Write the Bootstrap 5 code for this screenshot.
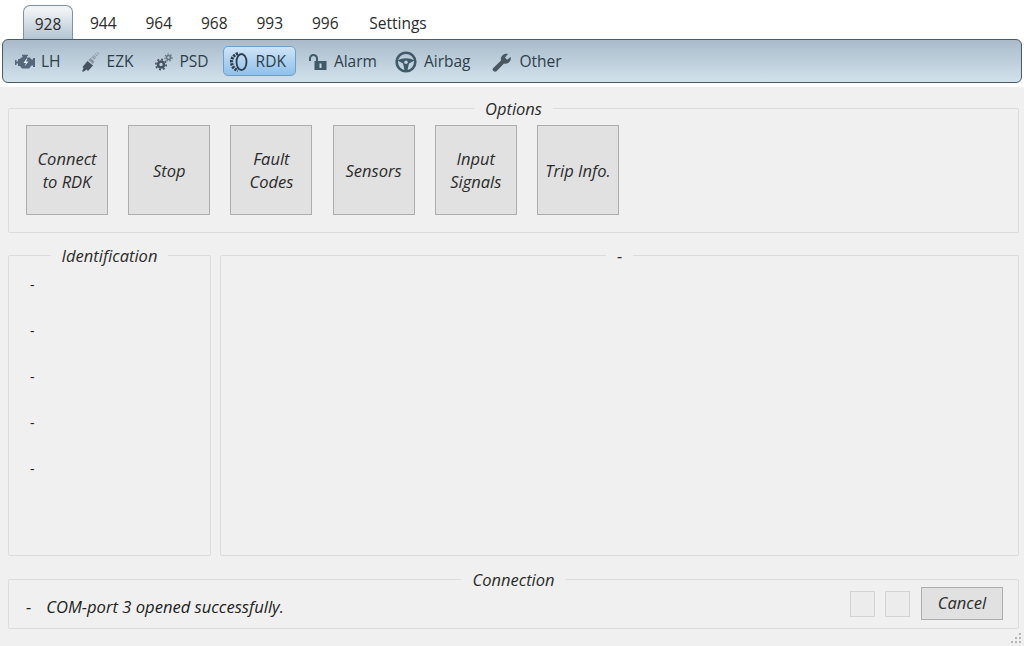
<!DOCTYPE html>
<html lang="en">
<head>
  <meta charset="UTF-8" />
  <title>Diagnostics</title>
  <link href="https://cdn.jsdelivr.net/npm/bootstrap@5.3.3/dist/css/bootstrap.min.css" rel="stylesheet" />
  <style>
    html, body { height: 100%; overflow: hidden; }
    body {
      font-family: "Open Sans", "Noto Sans", sans-serif;
      font-size: 15.5px;
      color: #222;
      background: #f0f0f0;
    }

    /* top ribbon */
    .top-area { height: 87px; background: #fff; padding: 5px 2px 0; }
    .tab-row { height: 34px; padding-left: 21px; }
    .tab-item { height: 34px; padding-top: 8px; line-height: 20px; font-size: 15.5px; color: #2b2b2b; text-align: center; }
    .tab-item.on {
      width: 50px;
      border: 1px solid #7f929f;
      border-bottom: 0;
      border-radius: 7px 7px 0 0;
      background: linear-gradient(#f1f4f6 10%, #b3c4d2);
      margin-right: 2.5px;
    }
    .tab-num { width: 55.5px; }
    .tab-last { width: 72px; margin-left: 9px; }
    .tool-bar {
      height: 44px;
      border: 1px solid #4c5a66;
      border-radius: 6px;
      background: linear-gradient(#a9bbcb, #d2e2ec);
      padding: 0 0 0 12px;
      gap: 20px;
    }
    .tool-item { height: 30px; padding-top: 2px; gap: 6px; color: #2e3e4a; line-height: 1; }
    .tool-item svg { flex: none; }
    .tool-item.on {
      border: 1px solid #6f9fc8;
      border-radius: 5px;
      background: linear-gradient(#cfe4f6, #8fc0ea);
      padding: 2px 9px 0 5px;
      margin: 0 -8px 0 -6px;
      gap: 7px;
    }
    .tool-airbag { margin-left: -2px; gap: 7px; }
    .tool-other { margin-left: 2px; gap: 7px; }

    /* group boxes */
    .group-box { border: 1px solid #dcdcdc; border-radius: 2px; margin: 0; padding: 0; min-width: 0; }
    .group-box legend {
      float: none;
      width: auto;
      margin: 0 auto;
      padding: 0 11px;
      font-size: 16.5px;
      font-style: italic;
      line-height: 20px;
      color: #2b2b2b;
      position: relative;
      top: 1px;
    }
    .page-body { padding: 11px 5px 0 8px; }
    .options-box { height: 135px; }
    .square-btn {
      width: 82px;
      height: 90px;
      border: 1px solid #adadad;
      background: #e1e1e1;
      font-style: italic;
      font-size: 16.5px;
      line-height: 23px;
      color: #2b2b2b;
      padding: 0;
    }
    .square-row { padding: 7px 0 0 17px; gap: 20.2px; }
    .mid-row { margin-top: 12px; gap: 9px; height: 311px; }
    .ident-box { width: 203px; flex: none; }
    .ident-line { height: 46px; padding-left: 21px; line-height: 20px; font-size: 14px; }
    .ident-list { padding-top: 10px; }
    .wide-box { flex: 1; }
    .conn-box { height: 60px; margin-top: 13px; }
    .conn-text { padding: 8px 0 0 17px; font-style: italic; font-size: 16.6px; gap: 15px; }
    .conn-inner { height: 34px; margin-top: -2px; padding-right: 15px; }
    .led { width: 25px; height: 26px; border: 1px solid #d2d2d2; background: #ececec; margin-left: 10px; }
    .cancel-btn {
      width: 82px;
      height: 33px;
      border: 1px solid #adadad;
      background: #e1e1e1;
      font-style: italic;
      font-size: 16.5px;
      color: #2b2b2b;
      padding: 0;
      margin-left: 11px;
    }
    .grip { position: fixed; right: 2px; bottom: 2px; }
  </style>
</head>
<body>

  <!-- Tabs and toolbar -->
  <div class="top-area">
    <div class="tab-row d-flex">
      <div class="tab-item on">928</div>
      <div class="tab-item tab-num">944</div>
      <div class="tab-item tab-num">964</div>
      <div class="tab-item tab-num">968</div>
      <div class="tab-item tab-num">993</div>
      <div class="tab-item tab-num">996</div>
      <div class="tab-item tab-last">Settings</div>
    </div>
    <div class="tool-bar d-flex align-items-center">
      <div class="tool-item d-flex align-items-center">
        <!-- engine -->
        <svg width="20" height="16" viewBox="0 0 20 16"><path d="M0 6h1.500v1.500H3V5h2l1-1.500h1.500V2H7V.8h6V2h-1v1.500h3l1.500 2H18V4h2v9h-2v-1.500h-1.500L14 14.500H7L5 12H3V9.500H1.500V11H0z" fill="#55677a"/><path d="M11.500 4.500 8.500 9H11l-1.500 3.500L13.500 7.500H11l1.500-3z" fill="#e4edf3"/></svg>
        LH
      </div>
      <div class="tool-item d-flex align-items-center">
        <!-- spark plug -->
        <svg width="20" height="22" viewBox="0 0 20 22"><path d="M1 20.500 2.500 17l-1-1 5-6 5.500 4.500-5 5.500-1.500-1.500-2.500 2z" fill="#46535e"/><path d="M7.500 9 9.500 7l4 3.500-1.700 2.400z" fill="#8795a1"/><path d="M10 6.500 16 .8l2.500 2-5 6z" fill="#9aa8b3"/><path d="M13 3.500l3 2.500M15 2l2.500 2" stroke="#d5dfe6" stroke-width=".8"/></svg>
        EZK
      </div>
      <div class="tool-item d-flex align-items-center">
        <!-- gears -->
        <svg width="20" height="18" viewBox="0 0 20 18"><circle cx="7" cy="11.500" r="3" fill="none" stroke="#46535e" stroke-width="2.600"/><circle cx="7" cy="11.500" r="5.200" fill="none" stroke="#46535e" stroke-width="1.600" stroke-dasharray="2 2"/><circle cx="14.500" cy="4.500" r="2" fill="none" stroke="#66747f" stroke-width="1.600"/><circle cx="14.500" cy="4.500" r="3.500" fill="none" stroke="#66747f" stroke-width="1.200" stroke-dasharray="1.500 1.500"/></svg>
        PSD
      </div>
      <div class="tool-item on d-flex align-items-center">
        <!-- tyre -->
        <svg width="20" height="22" viewBox="0 0 20 22"><ellipse cx="12.500" cy="11" rx="5" ry="8" fill="none" stroke="#2f3d48" stroke-width="1.800"/><path d="M9 2.500C4.500 4 2.500 7.500 2.500 11s2 7 6.500 8.500" fill="none" stroke="#2f3d48" stroke-width="3.200" stroke-dasharray="2.200 1"/></svg>
        RDK
      </div>
      <div class="tool-item d-flex align-items-center">
        <!-- open lock -->
        <svg width="20" height="18" viewBox="0 0 20 18"><path d="M2 8V5.500a3.500 3.500 0 0 1 7 0V8" fill="none" stroke="#3f5a69" stroke-width="2"/><rect x="6.500" y="8" width="12" height="9" fill="#3f5a69"/><rect x="11.500" y="10.500" width="2" height="4.500" fill="#c5d6e0"/></svg>
        Alarm
      </div>
      <div class="tool-item tool-airbag d-flex align-items-center">
        <!-- steering wheel -->
        <svg width="22" height="22" viewBox="0 0 22 22"><circle cx="11" cy="11" r="9.300" fill="none" stroke="#3f5a69" stroke-width="2.600"/><path d="M2.500 9.500c5.500-3 11.500-3 17 0l-5.500 3-1.500 6.500h-3L8 12.500z" fill="#3f5a69"/><circle cx="11" cy="11.200" r="1.700" fill="#c3d4df"/></svg>
        Airbag
      </div>
      <div class="tool-item tool-other d-flex align-items-center">
        <!-- wrench -->
        <svg width="20" height="20" viewBox="0 0 20 20"><path d="M.8 16.500 9 8.500c-.8-3.500 2.200-7.500 7-6.500l-3 3.500 2 2.300 3.800-2.800c.8 4-2.800 7.500-6.800 6.500l-7.500 7.800c-1.500 1.500-5-1-3.700-2.800z" fill="#4a5660"/></svg>
        Other
      </div>
    </div>
  </div>

  <div class="page-body">
    <!-- Options -->
    <fieldset class="group-box options-box">
      <legend>Options</legend>
      <div class="square-row d-flex">
        <button class="square-btn" type="button">Connect<br>to RDK</button>
        <button class="square-btn" type="button">Stop</button>
        <button class="square-btn" type="button">Fault<br>Codes</button>
        <button class="square-btn" type="button">Sensors</button>
        <button class="square-btn" type="button">Input<br>Signals</button>
        <button class="square-btn" type="button">Trip Info.</button>
      </div>
    </fieldset>

    <div class="mid-row d-flex">
      <fieldset class="group-box ident-box">
        <legend>Identification</legend>
        <div class="ident-list">
          <div class="ident-line">-</div>
          <div class="ident-line">-</div>
          <div class="ident-line">-</div>
          <div class="ident-line">-</div>
          <div class="ident-line">-</div>
        </div>
      </fieldset>
      <fieldset class="group-box wide-box">
        <legend>-</legend>
      </fieldset>
    </div>

    <!-- Connection -->
    <fieldset class="group-box conn-box">
      <legend>Connection</legend>
      <div class="conn-inner d-flex justify-content-between">
        <div class="conn-text d-flex"><span>-</span><span>COM-port 3 opened successfully.</span></div>
        <div class="d-flex align-items-start">
          <div class="led mt-1"></div>
          <div class="led mt-1"></div>
          <button class="cancel-btn" type="button">Cancel</button>
        </div>
      </div>
    </fieldset>
  </div>

  <svg class="grip" width="12" height="12" viewBox="0 0 12 12"><g fill="#b5b5b5"><rect x="9" y="1" width="2" height="2"/><rect x="5" y="5" width="2" height="2"/><rect x="9" y="5" width="2" height="2"/><rect x="1" y="9" width="2" height="2"/><rect x="5" y="9" width="2" height="2"/><rect x="9" y="9" width="2" height="2"/></g></svg>

  <script src="https://cdn.jsdelivr.net/npm/bootstrap@5.3.3/dist/js/bootstrap.bundle.min.js"></script>
</body>
</html>
